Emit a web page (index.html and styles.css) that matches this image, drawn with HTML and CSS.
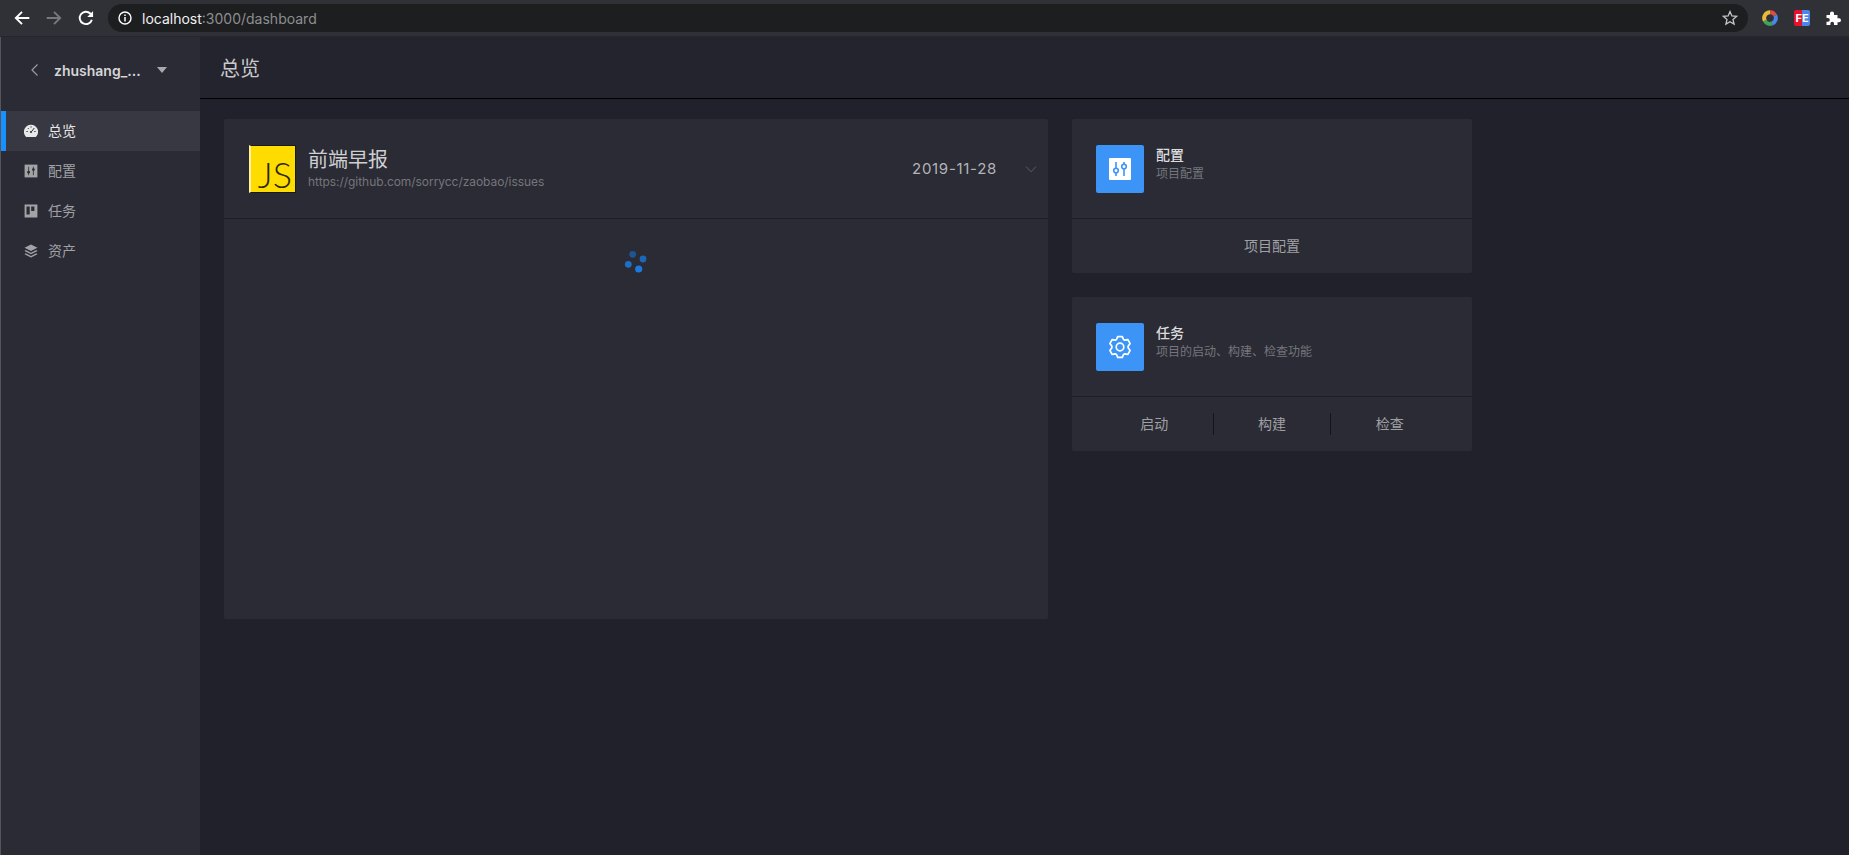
FILE: index.html
```html
<!DOCTYPE html>
<html lang="zh">
<head>
	<meta charset="utf-8">
	<title>总览</title>
	<link rel="stylesheet" href="styles.css">
</head>
<body>
	<div class="toolbar">
		<svg class="nav-icon" viewBox="0 0 16 16"><path d="M14.5 8H2.500M8 2.500 2.500 8 8 13.500" fill="none" stroke="#fff" stroke-width="1.700"/></svg>
		<svg class="nav-icon" viewBox="0 0 16 16"><path d="M1.500 8H13.500M8 2.500 13.500 8 8 13.500" fill="none" stroke="#77787c" stroke-width="1.700"/></svg>
		<svg class="nav-icon" viewBox="0 0 16 16"><path d="M13.200 9.500A5.500 5.500 0 1 1 11.800 4L13.500 5.700" fill="none" stroke="#fff" stroke-width="1.700"/><path d="M14.300 1.800V7H9.100z" fill="#fff"/></svg>
		<div class="omnibox">
			<svg class="info-icon" viewBox="0 0 16 16"><circle cx="8" cy="8" r="6" fill="none" stroke="#fff" stroke-width="1.400"/><path d="M8 7v4.400M8 4.400v1.500" stroke="#fff" stroke-width="1.500"/></svg>
			<span class="url-host">localhost</span><span class="url-rest">:3000/dashboard</span>
			<svg class="star-icon" viewBox="0 0 16 16"><path d="M8 1.600 9.900 6l4.700.4-3.600 3.100 1.100 4.600L8 11.700l-4.100 2.400L5 9.500 1.400 6.400 6.100 6z" fill="none" stroke="#c4c5c7" stroke-width="1.300"/></svg>
		</div>
		<svg class="ext-icon ext-ring" viewBox="0 0 16 16">
			<path d="M8 2.200A5.800 5.800 0 0 1 13.200 5.400" fill="none" stroke="#d9503f" stroke-width="4"/>
			<path d="M13.200 5.400A5.800 5.800 0 0 1 10 13.500" fill="none" stroke="#4a86e8" stroke-width="4"/>
			<path d="M10 13.500A5.800 5.800 0 0 1 2.800 10.600" fill="none" stroke="#3fa45b" stroke-width="4"/>
			<path d="M2.800 10.600A5.800 5.800 0 0 1 8 2.200" fill="none" stroke="#e8b93a" stroke-width="4"/>
		</svg>
		<div class="ext-fe"><span>FE</span></div>
		<svg class="ext-icon" viewBox="0 0 16 16"><path d="M1.500 5H5V3.500a2 2 0 0 1 4 0V5h3.500v3.200H14a2 2 0 0 1 0 4h-1.500V15H9v-1.500a1.800 1.800 0 0 0-3.600 0V15H1.500v-3.300H3a1.800 1.800 0 0 0 0-3.600H1.500z" fill="#fff"/></svg>
	</div>
	<div class="app">
		<aside class="sidebar">
			<div class="project">
				<svg class="back-icon" viewBox="0 0 10 14"><path d="M7.500 1.500 2 7l5.500 5.500" fill="none" stroke="#9a9ba0" stroke-width="1.200"/></svg>
				<span class="project-name">zhushang_...</span>
				<span class="caret"></span>
			</div>
			<ul class="menu">
				<li class="menu-item active">
					<svg viewBox="0 0 14 14"><path d="M7 .8A7 7 0 0 0 1.300 11.900l.9 1.100h9.600l.9-1.100A7 7 0 0 0 7 .8z" fill="#e8e8e9"/><path d="M2.400 7.500h1.300M3.800 4l.9.900M7 2.300v1.300M10.300 4 7.400 7.800M10.300 7.500h1.300" stroke="#33343d" stroke-width="1"/><circle cx="7" cy="8" r="1.100" fill="#33343d"/></svg>
					<span>总览</span>
				</li>
				<li class="menu-item">
					<svg viewBox="0 0 14 14"><rect x=".6" y=".6" width="12.800" height="12.800" fill="#a3a3a6"/><path d="M4.600 2.800v8.400M9.400 2.800v8.400" stroke="#2a2b34" stroke-width=".8"/><circle cx="4.600" cy="8.200" r="1.400" fill="#2a2b34"/><circle cx="9.400" cy="5.600" r="1.400" fill="#2a2b34"/></svg>
					<span>配置</span>
				</li>
				<li class="menu-item">
					<svg viewBox="0 0 14 14"><path d="M.6.6h12.800v12.800H.6zM2.500 2.500v8h3.200v-8zM7.200 2.500v4.500h3.200V2.500z" fill="#a3a3a6" fill-rule="evenodd"/></svg>
					<span>任务</span>
				</li>
				<li class="menu-item">
					<svg viewBox="0 0 14 14"><path d="M7 .5 13.500 3.800 7 7.100.5 3.800z" fill="#a3a3a6"/><path d="M1.700 6 7 8.700 12.300 6l1.200 1L7 10.300.5 7zM1.700 9.200 7 11.900l5.300-2.700 1.200 1L7 13.500.5 10.200z" fill="#a3a3a6"/></svg>
					<span>资产</span>
				</li>
			</ul>
		</aside>
		<main class="main">
			<header class="page-header">总览</header>
			<div class="content">
				<section class="card news-card">
					<div class="news-head">
						<div class="js-logo"><span>JS</span></div>
						<div class="news-title">
							<div class="news-name">前端早报</div>
							<div class="news-url">https://github.com/sorrycc/zaobao/issues</div>
						</div>
						<div class="news-date">2019-11-28</div>
						<svg class="chevron" viewBox="0 0 12 8"><path d="M1 1.500 6 6.800l5-5.300" fill="none" stroke="#5c5d65" stroke-width="1"/></svg>
					</div>
					<div class="news-body">
						<svg class="spinner" viewBox="0 0 24 24">
							<circle cx="8.700" cy="5.300" r="3.400" fill="#1d5590"/>
							<circle cx="19" cy="10" r="3.400" fill="#1c68b4"/>
							<circle cx="4.300" cy="15.300" r="3.400" fill="#1c70c8"/>
							<circle cx="14.700" cy="20" r="3.600" fill="#1a7ae0"/>
						</svg>
					</div>
				</section>
				<div class="side-column">
					<section class="card">
						<div class="tool-head">
							<div class="tool-icon">
								<svg viewBox="0 0 24 24"><rect x="1" y="1" width="22" height="22" rx="1" fill="#fff"/><path d="M8 5v14M16 5v14" stroke="#3c94f7" stroke-width="1.600"/><circle cx="8" cy="13.500" r="2.300" fill="#fff" stroke="#3c94f7" stroke-width="1.600"/><circle cx="16" cy="9.500" r="2.300" fill="#fff" stroke="#3c94f7" stroke-width="1.600"/></svg>
							</div>
							<div class="tool-text">
								<div class="tool-name">配置</div>
								<div class="tool-desc">项目配置</div>
							</div>
						</div>
						<div class="tool-actions">
							<div class="tool-action">项目配置</div>
						</div>
					</section>
					<section class="card">
						<div class="tool-head">
							<div class="tool-icon">
								<svg viewBox="0 0 24 24"><path d="M9.700 1.600h4.600l1.200 2.900 1.300.7 3.100-.6 2.200 4-2 2.700v1.400l2 2.700-2.200 4-3.100-.6-1.300.7-1.200 2.900H9.700l-1.200-2.900-1.300-.7-3.100.6-2.200-4 2-2.700v-1.400l-2-2.700 2.200-4 3.100.6 1.300-.7z" fill="none" stroke="#fff" stroke-width="1.700" stroke-linejoin="round"/><circle cx="12" cy="12" r="3.800" fill="none" stroke="#fff" stroke-width="1.700"/></svg>
							</div>
							<div class="tool-text">
								<div class="tool-name">任务</div>
								<div class="tool-desc">项目的启动、构建、检查功能</div>
							</div>
						</div>
						<div class="tool-actions">
							<div class="tool-action">启动</div>
							<div class="tool-action">构建</div>
							<div class="tool-action">检查</div>
						</div>
					</section>
				</div>
			</div>
		</main>
	</div>
</body>
</html>
```

FILE: styles.css
```css
* {
	box-sizing: border-box;
}
html, body {
	height: 100%;
}
body {
	margin: 0;
	display: flex;
	flex-direction: column;
	overflow: hidden;
	background-color: #20212a;
	font-family: Inter, "Noto Sans CJK SC", sans-serif;
	font-size: 14px;
	color: #a9a9ac;
}

/* browser bar */
.toolbar {
	height: 37px;
	flex-shrink: 0;
	display: flex;
	align-items: center;
	padding: 0 8px 0 13px;
	background-color: #303136;
	border-bottom: 1px solid #26272b;
}
.nav-icon {
	width: 18px;
	height: 18px;
	margin-right: 14px;
	flex-shrink: 0;
}
.omnibox {
	width: 1640px;
	height: 28px;
	margin: 0 14px 0 -1px;
	padding: 0 10px 0 9px;
	display: flex;
	flex-shrink: 0;
	align-items: center;
	border-radius: 14px;
	background-color: #1d1e20;
	font-size: 14px;
}
.info-icon {
	width: 16px;
	height: 16px;
	margin-right: 9px;
}
.url-host {
	color: #f1f1f2;
}
.url-rest {
	color: #8d8e90;
}
.star-icon {
	width: 16px;
	height: 16px;
	margin-left: auto;
}
.ext-icon {
	width: 16px;
	height: 16px;
	flex-shrink: 0;
}
.ext-ring {
	margin-right: 16px;
}
.ext-fe {
	width: 16px;
	height: 16px;
	margin-right: 15px;
	flex-shrink: 0;
	border-radius: 2px;
	background: linear-gradient(90deg, #e8112d 50%, #4a86e8 50%);
	color: #fff;
	font-size: 11px;
	font-weight: 700;
	line-height: 16px;
	text-align: center;
}

/* app */
.app {
	flex: 1;
	display: flex;
	min-height: 0;
}
.sidebar {
	width: 200px;
	flex-shrink: 0;
	background-color: #2a2b34;
	border-left: 1px solid #55565c;
}
.project {
	height: 74px;
	display: flex;
	align-items: center;
	padding: 0 0 8px 29px;
}
.back-icon {
	width: 10px;
	height: 14px;
	margin-right: 14px;
}
.project-name {
	width: 87px;
	font-size: 14px;
	font-weight: 600;
	color: #d5d5d7;
}
.caret {
	margin-left: 16px;
	border-left: 5px solid transparent;
	border-right: 5px solid transparent;
	border-top: 6px solid #a9a9ac;
}
.menu {
	margin: 0;
	padding: 0;
	list-style: none;
}
.menu-item {
	height: 40px;
	display: flex;
	align-items: center;
	padding-left: 23px;
	color: #a0a0a4;
}
.menu-item span {
	margin-bottom: 2px;
}
.menu-item svg {
	width: 14px;
	height: 14px;
	margin-right: 10px;
}
.menu-item.active {
	background-color: #373841;
	border-left: 5px solid #1890ff;
	padding-left: 18px;
	color: #e8e8e9;
}

.main {
	flex: 1;
	min-width: 0;
	display: flex;
	flex-direction: column;
}
.page-header {
	height: 62px;
	flex-shrink: 0;
	padding-left: 20px;
	display: flex;
	align-items: center;
	background-color: #23242d;
	border-bottom: 1px solid #000;
	font-size: 20px;
	color: #c9c9cb;
}
.content {
	display: flex;
	align-items: flex-start;
	gap: 24px;
	padding: 20px 24px;
}
.card {
	background-color: #2a2b34;
	border-radius: 2px;
}
.news-card {
	width: 824px;
	height: 500px;
}
.news-head {
	height: 100px;
	display: flex;
	align-items: center;
	padding: 0 11px 0 25px;
	border-bottom: 1px solid #1d1e26;
}
.js-logo {
	width: 47px;
	height: 48px;
	margin-right: 12px;
	padding-right: 3px;
	display: flex;
	align-items: flex-end;
	justify-content: flex-end;
	background-color: #ffdc00;
	border: 1px solid #1b1a12;
	border-left: 2px solid #fff3a0;
	color: #2b2710;
	font-family: Lato, sans-serif;
	font-size: 36px;
	font-weight: 300;
	line-height: 36px;
}
.news-title {
	flex: 1;
}
.news-name {
	font-size: 20px;
	line-height: 26px;
	color: #cfcfd1;
}
.news-url {
	font-size: 12px;
	line-height: 18px;
	letter-spacing: -.05px;
	color: #75767c;
}
.news-date {
	margin-right: 28px;
	font-size: 15px;
	letter-spacing: .7px;
	color: #b4b4b7;
}
.chevron {
	width: 12px;
	height: 8px;
}
.news-body {
	display: flex;
	justify-content: center;
	padding-top: 30px;
}
.spinner {
	width: 24px;
	height: 24px;
}
.side-column {
	width: 400px;
	display: flex;
	flex-direction: column;
	gap: 24px;
}
.tool-head {
	height: 100px;
	display: flex;
	align-items: center;
	padding-left: 24px;
	border-bottom: 1px solid #1d1e26;
}
.tool-icon {
	width: 48px;
	height: 48px;
	margin-right: 12px;
	display: flex;
	align-items: center;
	justify-content: center;
	background-color: #3c94f7;
	border-radius: 2px;
}
.tool-icon svg {
	width: 24px;
	height: 24px;
}
.tool-text {
	margin-bottom: 9px;
}
.tool-name {
	margin-bottom: 1px;
	font-size: 14px;
	font-weight: 500;
	line-height: 18px;
	color: #dcdcde;
}
.tool-desc {
	font-size: 12px;
	line-height: 18px;
	color: #75767c;
}
.tool-actions {
	height: 54px;
	padding: 0 24px;
	display: flex;
	align-items: center;
}
.tool-action {
	flex: 1;
	line-height: 22px;
	text-align: center;
	font-size: 14px;
	color: #a0a0a4;
}
.tool-action + .tool-action {
	border-left: 1px solid #14151b;
}
```
